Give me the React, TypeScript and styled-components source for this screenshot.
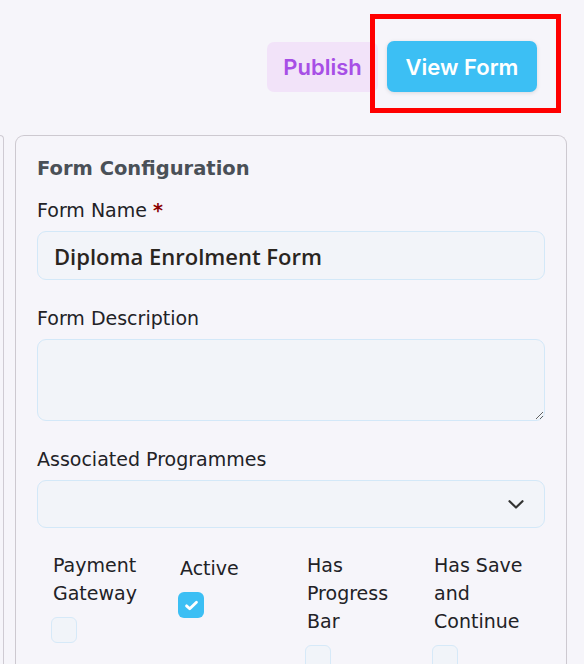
import styled, { createGlobalStyle } from 'styled-components'

const GlobalStyle = createGlobalStyle`
  html, body {
    margin: 0;
    padding: 0;
    background: #f6f5fa;
    font-family: 'DejaVu Sans', 'Open Sans', sans-serif;
    overflow: hidden;
  }
`

const options = [
  { label: 'Payment Gateway', checked: false, offset: 0 },
  { label: 'Active', checked: true, offset: 3 },
  { label: 'Has Progress Bar', checked: false, offset: 0 },
  { label: 'Has Save and Continue', checked: false, offset: 0 },
]

const CheckIcon = () => (
  <svg width='17' height='17' viewBox='0 0 24 24' fill='none'>
    <path
      d='M5 12.5l4.5 4.2L19 7.5'
      stroke='#ffffff'
      strokeWidth='4'
      strokeLinecap='round'
      strokeLinejoin='round'
    />
  </svg>
)

const Chevron = () => (
  <svg width='16' height='9' viewBox='0 0 16 9' fill='none'>
    <path
      d='M1.5 1.2l6.5 6.3 6.5-6.3'
      stroke='#333333'
      strokeWidth='2.2'
      strokeLinecap='round'
      strokeLinejoin='round'
    />
  </svg>
)

const App = () => {
  return (
    <>
      <GlobalStyle />
      <Page>
        <Header>
          <PublishButton>Publish</PublishButton>
          <Highlighted>
            <ViewButton>View Form</ViewButton>
            <Marker />
          </Highlighted>
        </Header>
        <Body>
          <SidePanel />
          <Card>
            <CardTitle>Form Configuration</CardTitle>
            <Field>
              <Label>
                Form Name <Required>*</Required>
              </Label>
              <TextInput defaultValue='Diploma Enrolment Form' />
            </Field>
            <Field>
              <Label>Form Description</Label>
              <TextArea />
            </Field>
            <Field>
              <Label>Associated Programmes</Label>
              <SelectBox>
                <Chevron />
              </SelectBox>
            </Field>
            <Options>
              {options.map((o) => (
                <Option key={o.label} $offset={o.offset}>
                  <OptionLabel>{o.label}</OptionLabel>
                  <Box $checked={o.checked}>{o.checked && <CheckIcon />}</Box>
                </Option>
              ))}
            </Options>
          </Card>
        </Body>
      </Page>
    </>
  )
}

const Page = styled.div`
  display: flex;
  flex-direction: column;
  height: 664px;
`

const Header = styled.div`
  display: flex;
  justify-content: flex-end;
  align-items: center;
  gap: 9px;
  padding: 41px 47px 0 0;
  height: 51px;
`

const ButtonBase = styled.button`
  height: 51px;
  border: none;
  border-radius: 7px;
  font-family: 'Inter', 'Open Sans', sans-serif;
  font-size: 22px;
  font-weight: 600;
  cursor: pointer;
`

const PublishButton = styled(ButtonBase)`
  width: 111px;
  height: 50px;
  margin-top: 1px;
  background: #f2e3f9;
  color: #a74fe6;
`

const Highlighted = styled.div`
  position: relative;
`

const ViewButton = styled(ButtonBase)`
  width: 150px;
  background: #3cbff4;
  color: #ffffff;
  box-shadow: 0 1px 4px rgba(0, 0, 0, 0.12);
`

const Marker = styled.div`
  position: absolute;
  left: -17px;
  top: -27px;
  right: -24px;
  bottom: -21px;
  border: 5px solid #ff0000;
  pointer-events: none;
`

const Body = styled.div`
  display: flex;
  gap: 11px;
  margin-top: 43px;
  flex: 1;
`

const SidePanel = styled.div`
  width: 3px;
  border: 1px solid #cfcbd3;
  border-left: none;
  border-bottom: none;
  border-top-right-radius: 8px;
`

const Card = styled.div`
  width: 508px;
  padding: 18px 21px 0 21px;
  border: 1px solid #cdc9d0;
  border-bottom: none;
  border-radius: 9px 9px 0 0;
  display: flex;
  flex-direction: column;
`

const CardTitle = styled.h2`
  margin: 0 0 13px 0;
  font-size: 19.5px;
  font-weight: 700;
  color: #4a5057;
  line-height: 30px;
`

const Field = styled.div`
  display: flex;
  flex-direction: column;
  gap: 8px;
  margin-bottom: 25px;
`

const Label = styled.label`
  font-size: 19px;
  color: #222226;
  line-height: 26px;
`

const Required = styled.span`
  color: #8b0000;
  font-weight: 700;
`

const fieldBox = `
  box-sizing: border-box;
  width: 100%;
  background: #f2f4f9;
  border: 1px solid #d3e8f8;
  border-radius: 9px;
`

const TextInput = styled.input`
  ${fieldBox}
  height: 49px;
  padding: 0 16px;
  font-family: 'Open Sans', sans-serif;
  font-size: 22px;
  font-weight: 600;
  color: #2a251f;
  outline: none;
`

const TextArea = styled.textarea`
  ${fieldBox}
  height: 82px;
  resize: vertical;
  outline: none;
  display: block;
`

const SelectBox = styled.div`
  ${fieldBox}
  height: 48px;
  display: flex;
  align-items: center;
  justify-content: flex-end;
  padding-right: 20px;
`

const Options = styled.div`
  display: grid;
  grid-template-columns: repeat(4, 1fr);
  margin-top: -2px;
`

const Option = styled.div<{ $offset: number }>`
  display: flex;
  flex-direction: column;
  align-items: flex-start;
  padding: ${(p) => p.$offset}px 16px 0 16px;
`

const OptionLabel = styled.span`
  font-size: 19px;
  line-height: 28px;
  color: #222226;
`

const Box = styled.span<{ $checked: boolean }>`
  box-sizing: border-box;
  width: 26px;
  height: 26px;
  margin: 10px 0 0 -2px;
  border-radius: 6px;
  display: flex;
  align-items: center;
  justify-content: center;
  background: ${(p) => (p.$checked ? '#3cbff4' : '#f1f4f9')};
  border: ${(p) => (p.$checked ? 'none' : '1.5px solid #d6e9f8')};
`

export default App
